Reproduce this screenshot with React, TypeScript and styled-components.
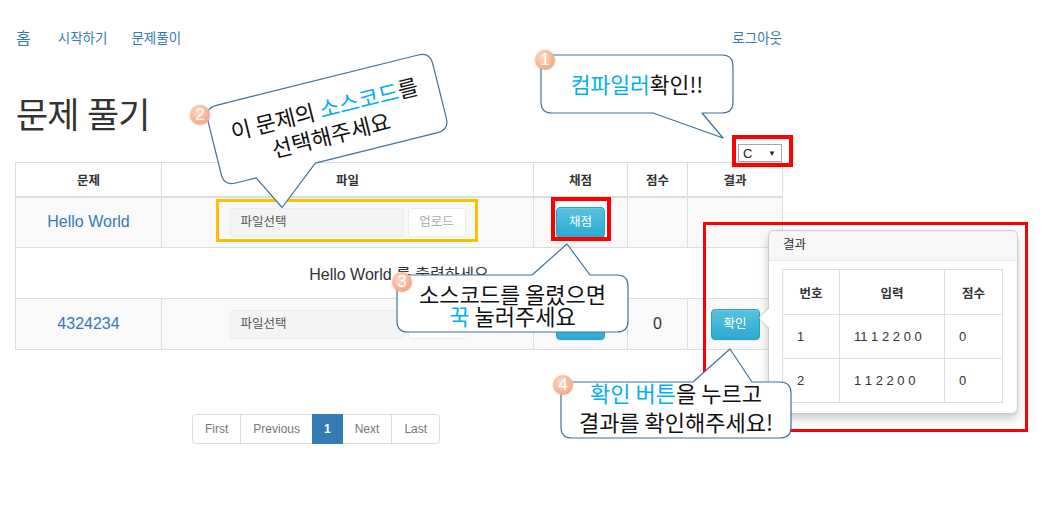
import React from "react";
import styled, { createGlobalStyle } from "styled-components";

const GlobalStyle = createGlobalStyle`
  html, body { margin: 0; padding: 0; background: #fff; }
  body {
    font-family: "Liberation Sans", "Noto Sans CJK KR", sans-serif;
    color: #333;
    font-size: 13px;
  }
  * { box-sizing: border-box; }
`;

const Page = styled.div`
  position: relative;
  width: 1042px;
  height: 509px;
  overflow: hidden;
`;

const Container = styled.div`
  width: 797px;
  padding: 0 15px;
`;

const Nav = styled.nav`
  display: flex;
  justify-content: space-between;
  align-items: center;
  padding-top: 30px;
  height: 48px;
`;

const NavLeft = styled.div`
  display: flex;
  align-items: center;
  gap: 24px;
`;

const NavLink = styled.a<{ $big?: boolean }>`
  color: #337ab7;
  text-decoration: none;
  font-size: ${(p) => (p.$big ? "16px" : "13.5px")};
  line-height: 18px;
  padding-left: ${(p) => (p.$big ? "1px" : "0")};
  margin-right: ${(p) => (p.$big ? "3px" : "0")};
`;

const Title = styled.h1`
  margin: 48px 0 0;
  font-size: 35px;
  line-height: 40px;
  font-weight: 400;
  letter-spacing: -1px;
  color: #333;
  padding-left: 1px;
`;

const SelectRow = styled.div`
  display: flex;
  justify-content: flex-end;
  margin-top: 8px;
  height: 18px;
`;

const FakeSelect = styled.div`
  width: 44px;
  height: 18px;
  border: 1px solid #a6a6a6;
  background: #fff;
  display: flex;
  align-items: center;
  justify-content: space-between;
  padding: 0 5px 0 4px;
  font-size: 13px;
  color: #222;
`;

const Caret = styled.span`
  font-size: 8px;
  color: #222;
`;

const Table = styled.table`
  width: 767px;
  table-layout: fixed;
  border-collapse: collapse;
  border: 1px solid #ddd;
`;

const Th = styled.th`
  height: 34px;
  border: 1px solid #ddd;
  border-bottom: 2px solid #ddd;
  font-size: 12.5px;
  font-weight: 700;
  text-align: center;
  vertical-align: middle;
  color: #333;
  padding: 0 8px;
`;

const Tr = styled.tr<{ $striped?: boolean }>`
  background: ${(p) => (p.$striped ? "#f9f9f9" : "#fff")};
`;

const Td = styled.td`
  height: 51px;
  border: 1px solid #ddd;
  text-align: center;
  vertical-align: middle;
  padding: 0 8px;
  font-size: 16px;
  color: #333;
`;

const CellLink = styled.a`
  color: #337ab7;
  text-decoration: none;
  font-size: 16px;
`;

const FileGroup = styled.div`
  display: inline-flex;
  align-items: center;
  gap: 4px;
`;

const FileInput = styled.div`
  width: 174px;
  height: 29px;
  background: #f4f4f4;
  border: 1px solid #ececec;
  border-radius: 3px;
  text-align: left;
  padding-left: 10px;
  line-height: 27px;
  font-size: 12.5px;
  color: #555;
`;

const UploadButton = styled.div`
  width: 58px;
  height: 29px;
  background: #fff;
  border: 1px solid #ececec;
  border-radius: 3px;
  line-height: 27px;
  font-size: 12.5px;
  color: #aaa;
  text-align: center;
`;

const InfoButton = styled.div`
  display: inline-block;
  width: 49px;
  height: 31px;
  line-height: 29px;
  border: 1px solid #28a4c9;
  border-radius: 4px;
  background: linear-gradient(to bottom, #5bc0de 0%, #2aabd2 100%);
  color: #fff;
  font-size: 12.5px;
  text-align: center;
  box-shadow: inset 0 1px 0 rgba(255, 255, 255, 0.15), 0 1px 1px rgba(0, 0, 0, 0.075);
`;

const Pagination = styled.ul`
  display: flex;
  list-style: none;
  margin: 64px 0 0 177px;
  padding: 0;
`;

const PageItem = styled.li<{ $active?: boolean; $first?: boolean; $last?: boolean }>`
  height: 30px;
  line-height: 28px;
  padding: 0 ${(p) => (p.$active ? "11px" : "12px")};
  margin-left: ${(p) => (p.$first ? "0" : "-1px")};
  border: 1px solid ${(p) => (p.$active ? "#337ab7" : "#ddd")};
  background: ${(p) => (p.$active ? "#337ab7" : "#fff")};
  color: ${(p) => (p.$active ? "#fff" : "#777")};
  font-weight: ${(p) => (p.$active ? 700 : 400)};
  font-size: 12px;
  position: relative;
  z-index: ${(p) => (p.$active ? 2 : 1)};
  border-radius: ${(p) => (p.$first ? "4px 0 0 4px" : p.$last ? "0 4px 4px 0" : "0")};
`;

/* ---------- overlays ---------- */

const Mark = styled.div<{ $x: number; $y: number; $w: number; $h: number; $color: string; $t: number }>`
  position: absolute;
  left: ${(p) => p.$x}px;
  top: ${(p) => p.$y}px;
  width: ${(p) => p.$w}px;
  height: ${(p) => p.$h}px;
  border: ${(p) => p.$t}px solid ${(p) => p.$color};
  pointer-events: none;
`;

const Popover = styled.div`
  position: absolute;
  left: 768px;
  top: 230px;
  width: 250px;
  height: 184px;
  background: #fff;
  border: 1px solid rgba(0, 0, 0, 0.2);
  border-radius: 6px;
  box-shadow: 0 5px 10px rgba(0, 0, 0, 0.2);
`;

const PopoverArrow = styled.div`
  position: absolute;
  left: -11px;
  top: 76px;
  width: 0;
  height: 0;
  border-style: solid;
  border-width: 11px 11px 11px 0;
  border-color: transparent rgba(0, 0, 0, 0.2) transparent transparent;
  &::after {
    content: "";
    position: absolute;
    left: 1px;
    top: -10px;
    border-style: solid;
    border-width: 10px 10px 10px 0;
    border-color: transparent #fff transparent transparent;
  }
`;

const PopoverTitle = styled.div`
  height: 30px;
  line-height: 29px;
  padding: 0 14px;
  background: #f7f7f7;
  border-bottom: 1px solid #ebebeb;
  border-radius: 5px 5px 0 0;
  font-size: 12.5px;
  color: #333;
`;

const PopoverBody = styled.div`
  padding: 8px 14px 9px 13px;
`;

const ResultTable = styled.table`
  width: 220px;
  table-layout: fixed;
  border-collapse: collapse;
  border: 1px solid #ddd;
`;

const RTh = styled.th`
  height: 45px;
  border: 1px solid #ddd;
  font-size: 12.5px;
  font-weight: 700;
  text-align: center;
  color: #333;
  padding: 0;
`;

const RTd = styled.td`
  height: 44px;
  border: 1px solid #ddd;
  font-size: 13px;
  text-align: left;
  padding: 0 0 0 14px;
  color: #333;
`;

const CalloutBox = styled.div<{ $x: number; $y: number; $w: number; $h: number; $rot?: number }>`
  position: absolute;
  left: ${(p) => p.$x}px;
  top: ${(p) => p.$y}px;
  width: ${(p) => p.$w}px;
  height: ${(p) => p.$h}px;
  transform: rotate(${(p) => p.$rot ?? 0}deg);
`;

const BubbleSvg = styled.svg`
  position: absolute;
  left: 0;
  top: 0;
  overflow: visible;
`;

const CalloutText = styled.div<{ $size: number; $lh: number; $pt?: number; $pb?: number }>`
  position: absolute;
  inset: 0;
  display: flex;
  flex-direction: column;
  align-items: center;
  justify-content: center;
  padding-top: ${(p) => p.$pt ?? 0}px;
  padding-bottom: ${(p) => p.$pb ?? 0}px;
  font-family: "Noto Sans CJK KR", "Liberation Sans", sans-serif;
  font-size: ${(p) => p.$size}px;
  line-height: ${(p) => p.$lh}px;
  color: #111;
  white-space: nowrap;
`;

const Hi = styled.span`
  color: #00b0f0;
`;

const Badge = styled.div<{ $cx: number; $cy: number }>`
  position: absolute;
  left: ${(p) => p.$cx - 10}px;
  top: ${(p) => p.$cy - 10}px;
  width: 20px;
  height: 20px;
  border-radius: 50%;
  background: radial-gradient(circle at 40% 35%, #fcd9c7 0%, #f6b394 55%, #ef9d7b 100%);
  box-shadow: 0 0 2px rgba(240, 150, 110, 0.6);
  color: #fff;
  font-family: "Liberation Sans", sans-serif;
  font-size: 17px;
  line-height: 20px;
  text-align: center;
`;

type Tail = { side: "top" | "bottom"; a: number; b: number; tx: number; ty: number };

function bubblePath(w: number, h: number, r: number, t: Tail) {
  if (t.side === "top") {
    return `M ${r} 0 H ${t.a} L ${t.tx} ${t.ty} L ${t.b} 0 H ${w - r} Q ${w} 0 ${w} ${r} V ${h - r} Q ${w} ${h} ${w - r} ${h} H ${r} Q 0 ${h} 0 ${h - r} V ${r} Q 0 0 ${r} 0 Z`;
  }
  return `M ${r} 0 H ${w - r} Q ${w} 0 ${w} ${r} V ${h - r} Q ${w} ${h} ${w - r} ${h} H ${t.b} L ${t.tx} ${t.ty} L ${t.a} ${h} H ${r} Q 0 ${h} 0 ${h - r} V ${r} Q 0 0 ${r} 0 Z`;
}

function Callout(props: {
  x: number;
  y: number;
  w: number;
  h: number;
  r: number;
  tail: Tail;
  rot?: number;
  size: number;
  lh: number;
  pt?: number;
  pb?: number;
  children: React.ReactNode;
}) {
  const { x, y, w, h, r, tail, rot, size, lh, pt, pb, children } = props;
  return (
    <CalloutBox $x={x} $y={y} $w={w} $h={h} $rot={rot}>
      <BubbleSvg width={w} height={h}>
        <path d={bubblePath(w, h, r, tail)} fill="#fff" stroke="#41719c" strokeWidth={1.2} strokeLinejoin="round" />
      </BubbleSvg>
      <CalloutText $size={size} $lh={lh} $pt={pt} $pb={pb}>
        {children}
      </CalloutText>
    </CalloutBox>
  );
}

export default function App() {
  return (
    <Page>
      <GlobalStyle />
      <Container>
        <Nav>
          <NavLeft>
            <NavLink $big>홈</NavLink>
            <NavLink>시작하기</NavLink>
            <NavLink>문제풀이</NavLink>
          </NavLeft>
          <NavLink>로그아웃</NavLink>
        </Nav>
        <Title>문제 풀기</Title>
        <SelectRow>
          <FakeSelect>
            <span>C</span>
            <Caret>▼</Caret>
          </FakeSelect>
        </SelectRow>
        <Table>
          <colgroup>
            <col style={{ width: 146 }} />
            <col style={{ width: 372 }} />
            <col style={{ width: 94 }} />
            <col style={{ width: 60 }} />
            <col style={{ width: 95 }} />
          </colgroup>
          <thead>
            <tr>
              <Th>문제</Th>
              <Th>파일</Th>
              <Th>채점</Th>
              <Th>점수</Th>
              <Th>결과</Th>
            </tr>
          </thead>
          <tbody>
            <Tr $striped>
              <Td>
                <CellLink>Hello World</CellLink>
              </Td>
              <Td>
                <FileGroup>
                  <FileInput>파일선택</FileInput>
                  <UploadButton>업로드</UploadButton>
                </FileGroup>
              </Td>
              <Td>
                <InfoButton>채점</InfoButton>
              </Td>
              <Td />
              <Td />
            </Tr>
            <Tr>
              <Td colSpan={5}>Hello World 를 출력하세요</Td>
            </Tr>
            <Tr $striped>
              <Td>
                <CellLink>4324234</CellLink>
              </Td>
              <Td>
                <FileGroup>
                  <FileInput>파일선택</FileInput>
                  <UploadButton>업로드</UploadButton>
                </FileGroup>
              </Td>
              <Td>
                <InfoButton>채점</InfoButton>
              </Td>
              <Td>0</Td>
              <Td>
                <InfoButton>확인</InfoButton>
              </Td>
            </Tr>
          </tbody>
        </Table>
        <Pagination>
          <PageItem $first>First</PageItem>
          <PageItem>Previous</PageItem>
          <PageItem $active>1</PageItem>
          <PageItem>Next</PageItem>
          <PageItem $last>Last</PageItem>
        </Pagination>
      </Container>

      <Mark $x={732} $y={135} $w={61} $h={32} $color="#ff0000" $t={4} />
      <Mark $x={216} $y={199} $w={262} $h={43} $color="#ffc000" $t={3} />
      <Mark $x={551} $y={197} $w={60} $h={44} $color="#ff0000" $t={4} />
      <Mark $x={703} $y={222} $w={325} $h={210} $color="#ff0000" $t={3} />

      <Popover>
        <PopoverArrow />
        <PopoverTitle>결과</PopoverTitle>
        <PopoverBody>
          <ResultTable>
            <colgroup>
              <col style={{ width: 57 }} />
              <col style={{ width: 105 }} />
              <col style={{ width: 58 }} />
            </colgroup>
            <thead>
              <tr>
                <RTh>번호</RTh>
                <RTh>입력</RTh>
                <RTh>점수</RTh>
              </tr>
            </thead>
            <tbody>
              <tr>
                <RTd>1</RTd>
                <RTd>11 1 2 2 0 0</RTd>
                <RTd>0</RTd>
              </tr>
              <tr>
                <RTd>2</RTd>
                <RTd>1 1 2 2 0 0</RTd>
                <RTd>0</RTd>
              </tr>
            </tbody>
          </ResultTable>
        </PopoverBody>
      </Popover>

      <Callout x={541} y={55} w={192} h={58} r={11} size={21.5} lh={26}
        tail={{ side: "bottom", a: 112, b: 161, tx: 182, ty: 83 }}>
        <div>
          <Hi>컴파일러</Hi>확인!!
        </div>
      </Callout>
      <Badge $cx={545} $cy={60}>1</Badge>

      <Callout x={211} y={79} w={232} h={80} r={12} rot={-14} size={22} lh={27} pt={3}
        tail={{ side: "bottom", a: 33, b: 94, tx: 51, ty: 115 }}>
        <div>
          이 문제의 <Hi>소스코드</Hi>를
        </div>
        <div>선택해주세요</div>
      </Callout>
      <Badge $cx={200} $cy={115}>2</Badge>

      <Callout x={397} y={275} w={231} h={57} r={11} size={22} lh={22}
        tail={{ side: "top", a: 135, b: 193, tx: 170, ty: -31 }}>
        <div>소스코드를 올렸으면</div>
        <div>
          <Hi>꾹</Hi> 눌러주세요
        </div>
      </Callout>
      <Badge $cx={402} $cy={282}>3</Badge>

      <Callout x={561} y={382} w={230} h={56} r={11} size={22} lh={29} pb={6}
        tail={{ side: "top", a: 132, b: 191, tx: 169, ty: -33 }}>
        <div>
          <Hi>확인 버튼</Hi>을 누르고
        </div>
        <div>결과를 확인해주세요!</div>
      </Callout>
      <Badge $cx={563} $cy={385}>4</Badge>
    </Page>
  );
}
